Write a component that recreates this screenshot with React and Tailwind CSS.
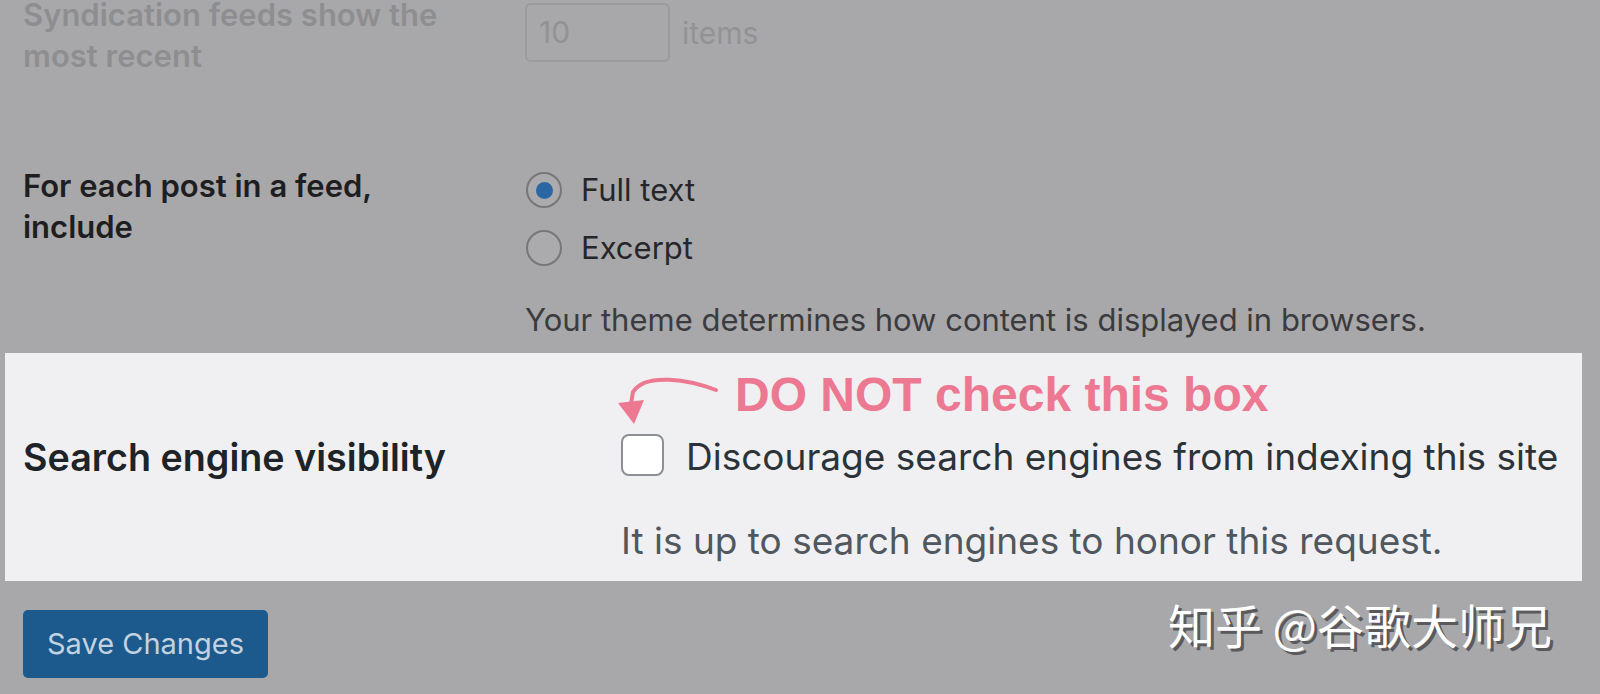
import React from 'react';

// WordPress "Reading settings" screenshot: dimmed page with one highlighted row
function Radio({ checked }) {
  return (
    <span className="flex h-[36px] w-[36px] shrink-0 items-center justify-center rounded-full border-2 border-[#77777b] bg-[#ababad]">
      {checked && <span className="h-[17px] w-[17px] rounded-full bg-[#2a66a2]" />}
    </span>
  );
}

function Arrow() {
  return (
    <svg
      className="pointer-events-none absolute left-0 top-0"
      width="1600"
      height="694"
      viewBox="0 0 1600 694"
      fill="none"
    >
      <path d="M716 390 C 690 380, 645 372, 633 392 L 631 404" stroke="#ec7891" strokeWidth="4" strokeLinecap="round" />
      <path d="M618 403 L 644 400 L 634 424 Z" fill="#ec7891" />
    </svg>
  );
}

export default function App() {
  return (
    <div className="relative h-[694px] w-[1600px] overflow-hidden bg-[#a8a8aa] font-['Inter',sans-serif]">
      {/* syndication row, cut at the top */}
      <div className="flex h-[165px]">
        <div className="w-[525px] pl-[23px] mt-[-6px] text-[31px] font-semibold leading-[41px] text-[#8e8e91]">
          <div>Syndication feeds show the</div>
          <div>most recent</div>
        </div>
        <div className="mt-[3px] flex items-start gap-[12px]">
          <div className="flex h-[59px] w-[145px] items-center rounded-[6px] border-2 border-[#9b9b9e] pl-[12px] text-[30px] text-[#929295]">
            10
          </div>
          <span className="pt-[8px] text-[30px] text-[#929295]">items</span>
        </div>
      </div>

      {/* feed content row */}
      <div className="flex h-[188px]">
        <div className="w-[525px] pl-[23px] text-[31px] font-semibold leading-[41px] text-[#1e1e22]">
          <div>For each post in a feed,</div>
          <div>include</div>
        </div>
        <div className="mt-[-4px] flex flex-col">
          <label className="flex h-[58px] items-center gap-[19px] pl-[1px] text-[31px] text-[#26262a]">
            <Radio checked />
            Full text
          </label>
          <label className="flex h-[58px] items-center gap-[19px] pl-[1px] text-[31px] text-[#26262a]">
            <Radio />
            Excerpt
          </label>
          <p className="mt-[23px] text-[31px] leading-[40px] text-[#3b3b3f]">
            Your theme determines how content is displayed in browsers.
          </p>
        </div>
      </div>

      {/* highlighted row */}
      <div className="ml-[5px] flex h-[228px] w-[1577px] bg-[#f0f0f2]">
        <div className="w-[616px] pl-[18px] pt-[84px] text-[37.7px] font-semibold leading-[40px] text-[#1d2327]">
          Search engine visibility
        </div>
        <div className="flex flex-col pt-[22px]">
          <div className="pl-[114px] font-['Liberation_Sans',sans-serif] text-[48px] font-bold leading-[40px] text-[#ec7891]">
            DO NOT check this box
          </div>
          <label className="mt-[18px] flex h-[44px] items-center gap-[22px] text-[37px] text-[#2c3338]">
            <span className="h-[42px] w-[43px] shrink-0 rounded-[8px] border-2 border-[#8c8f94] bg-white" />
            <span className="pt-[3px]">Discourage search engines from indexing this site</span>
          </label>
          <p className="mt-[44px] text-[37px] leading-[40px] text-[#50575e]">
            It is up to search engines to honor this request.
          </p>
        </div>
      </div>

      <button className="ml-[23px] mt-[29px] flex h-[68px] w-[245px] items-center justify-center rounded-[5px] bg-[#1c5a8d] text-[29px] text-[#c3d2e0]">
        Save Changes
      </button>

      <Arrow />

      <div className="absolute left-[1168px] top-[594px] font-['Noto_Sans_CJK_SC',sans-serif] text-[47px] font-normal leading-[60px] text-white [text-shadow:3px_3px_0_#5a5a5c]">
        知乎 @谷歌大师兄
      </div>
    </div>
  );
}
